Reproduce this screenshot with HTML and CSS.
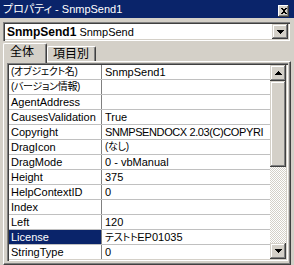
FILE: index.html
```html
<!DOCTYPE html>
<html lang="ja">
<head>
  <meta charset="UTF-8">
  <title>プロパティ - SnmpSend1</title>
  <link rel="stylesheet" href="styles.css">
</head>
<body>
  <div class="window">
    <div class="titlebar">
      <span class="title">プロパティ - SnmpSend1</span>
      <span class="close-btn">
        <svg width="6" height="6" viewBox="0 0 6 6" shape-rendering="crispEdges">
          <rect x="0" y="0" width="2" height="1"/><rect x="4" y="0" width="2" height="1"/>
          <rect x="1" y="1" width="4" height="1"/>
          <rect x="2" y="2" width="2" height="2"/>
          <rect x="1" y="4" width="4" height="1"/>
          <rect x="0" y="5" width="2" height="1"/><rect x="4" y="5" width="2" height="1"/>
        </svg>
      </span>
    </div>

    <div class="combo">
      <div class="combo-text"><b>SnmpSend1</b> SnmpSend</div>
      <div class="btn3d combo-btn">
        <svg width="7" height="4" viewBox="0 0 7 4" shape-rendering="crispEdges">
          <rect x="0" y="0" width="7" height="1"/><rect x="1" y="1" width="5" height="1"/>
          <rect x="2" y="2" width="3" height="1"/><rect x="3" y="3" width="1" height="1"/>
        </svg>
      </div>
    </div>

    <div class="tabs">
      <div class="tab active">全体</div>
      <div class="tab">項目別</div>
    </div>

    <div class="panel">
      <div class="grid">
        <div class="rows">
          <div class="row"><div class="name ja">(オブジェクト名)</div><div class="value">SnmpSend1</div></div>
          <div class="row"><div class="name ja">(バージョン情報)</div><div class="value"></div></div>
          <div class="row"><div class="name">AgentAddress</div><div class="value"></div></div>
          <div class="row"><div class="name">CausesValidation</div><div class="value">True</div></div>
          <div class="row"><div class="name">Copyright</div><div class="value tight">SNMPSENDOCX 2.03(C)COPYRI</div></div>
          <div class="row"><div class="name">DragIcon</div><div class="value ja">(なし)</div></div>
          <div class="row"><div class="name">DragMode</div><div class="value">0 - vbManual</div></div>
          <div class="row"><div class="name">Height</div><div class="value">375</div></div>
          <div class="row"><div class="name">HelpContextID</div><div class="value">0</div></div>
          <div class="row"><div class="name">Index</div><div class="value"></div></div>
          <div class="row"><div class="name">Left</div><div class="value">120</div></div>
          <div class="row"><div class="name selected">License</div><div class="value"><span class="ja">テストト</span>EP01035</div></div>
          <div class="row"><div class="name">StringType</div><div class="value">0</div></div>
        </div>
        <div class="scrollbar">
          <div class="btn3d sb-btn">
            <svg width="7" height="4" viewBox="0 0 7 4" shape-rendering="crispEdges">
              <rect x="3" y="0" width="1" height="1"/><rect x="2" y="1" width="3" height="1"/>
              <rect x="1" y="2" width="5" height="1"/><rect x="0" y="3" width="7" height="1"/>
            </svg>
          </div>
          <div class="btn3d sb-thumb"></div>
          <div class="sb-track"></div>
          <div class="btn3d sb-btn">
            <svg width="7" height="4" viewBox="0 0 7 4" shape-rendering="crispEdges">
              <rect x="0" y="0" width="7" height="1"/><rect x="1" y="1" width="5" height="1"/>
              <rect x="2" y="2" width="3" height="1"/><rect x="3" y="3" width="1" height="1"/>
            </svg>
          </div>
        </div>
      </div>
    </div>
  </div>
</body>
</html>
```

FILE: styles.css
```css
body {
  margin: 0;
  background-color: #d4d0c8;
  font-family: "Liberation Sans", "Noto Sans CJK JP", sans-serif;
  font-size: 11px;
  color: #000;
  font-feature-settings: "palt";
}
.window {
  width: 294px;
  height: 265px;
  display: flex;
  flex-direction: column;
  overflow: hidden;
}
.titlebar {
  height: 18px;
  flex-shrink: 0;
  background-color: #0a246a;
  color: #fff;
  display: flex;
  align-items: center;
  justify-content: space-between;
  padding: 0 5px 0 3px;
  box-sizing: border-box;
}
.title {
  line-height: 18px;
  white-space: nowrap;
}
.close-btn {
  width: 11px;
  height: 12px;
  margin-top: 3px;
  background-color: #d4d0c8;
  box-shadow: inset -1px -1px #404040, inset 1px 1px #fff, inset -2px -2px #808080;
  display: flex;
  align-items: center;
  justify-content: center;
}
.btn3d {
  background-color: #d4d0c8;
  box-shadow: inset -1px -1px #404040, inset 1px 1px #d4d0c8, inset -2px -2px #808080, inset 2px 2px #fff;
  display: flex;
  align-items: center;
  justify-content: center;
}
.combo {
  margin: 4px 4px 0 3px;
  height: 19px;
  flex-shrink: 0;
  box-sizing: border-box;
  background-color: #fff;
  padding: 2px;
  box-shadow: inset 1px 1px #808080, inset 2px 2px #404040, inset -1px -1px #fff, inset -2px -2px #d4d0c8;
  display: flex;
  align-items: center;
  min-width: 0;
}
.combo-text {
  flex: 1;
  padding-left: 2px;
  white-space: nowrap;
  font-size: 11px;
}
.combo-text b {
  font-size: 12px;
}
.combo-btn {
  width: 16px;
  height: 15px;
}
.tabs {
  display: flex;
  align-items: flex-start;
  height: 18px;
  flex-shrink: 0;
  margin: 2px 0 0 3px;
  position: relative;
  z-index: 1;
}
.tab {
  height: 15px;
  margin-top: 3px;
  box-sizing: border-box;
  padding: 0 6px 0 5px;
  border-top: 1px solid #fff;
  border-left: 1px solid #fff;
  border-right: 1px solid #404040;
  border-radius: 2px 2px 0 0;
  box-shadow: inset -1px 0 #808080;
  font-size: 12px;
  line-height: 14px;
  background-color: #d4d0c8;
}
.tab.active {
  height: 20px;
  margin-top: 0;
  width: 44px;
  padding: 1px 0 0 6px;
}
.panel {
  flex: 1;
  margin: 0 3px;
  border: 1px solid;
  border-color: #fff #404040 #404040 #fff;
  box-shadow: inset -1px -1px #808080;
  padding: 1px 2px 3px 3px;
  display: flex;
  min-height: 0;
  min-width: 0;
}
.grid {
  flex: 1;
  display: flex;
  padding: 2px;
  background-color: #fff;
  box-shadow: inset 1px 1px #808080, inset 2px 2px #404040, inset -1px -1px #fff, inset -2px -2px #d4d0c8;
  min-height: 0;
  min-width: 0;
  overflow: hidden;
}
.rows {
  flex: 1;
  overflow: hidden;
  min-width: 0;
}
.row {
  display: flex;
  height: 15px;
  box-sizing: border-box;
  border-bottom: 1px solid #c0c0c0;
  line-height: 14px;
  white-space: nowrap;
}
.name {
  width: 93px;
  flex-shrink: 0;
  box-sizing: border-box;
  padding-left: 2px;
  border-right: 1px solid #808080;
  overflow: hidden;
}
.name.selected {
  background-color: #0a246a;
  color: #fff;
}
.value {
  flex: 1;
  min-width: 0;
  padding-left: 3px;
  overflow: hidden;
}
.ja {
  font-size: 10px;
  letter-spacing: -0.3px;
}
.tight {
  letter-spacing: -0.4px;
}
.scrollbar {
  width: 16px;
  flex-shrink: 0;
  display: flex;
  flex-direction: column;
}
.sb-btn {
  height: 16px;
  flex-shrink: 0;
}
.sb-thumb {
  height: 86px;
  flex-shrink: 0;
}
.sb-track {
  flex: 1;
  background-color: #fff;
  background-image: repeating-conic-gradient(#d4d0c8 0 25%, #fff 0 50%);
  background-size: 2px 2px;
}
```
